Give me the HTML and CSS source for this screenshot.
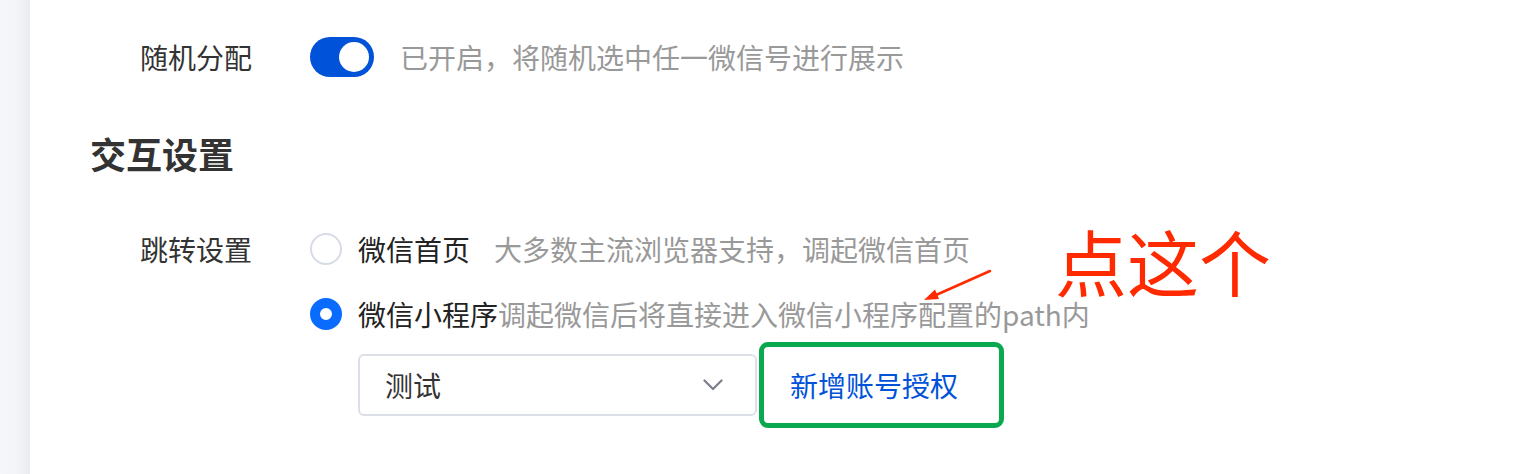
FILE: index.html
```html
<!DOCTYPE html>
<html lang="zh-CN">

<head>
    <meta charset="UTF-8">
    <meta name="viewport" content="width=device-width, initial-scale=1.0">
    <title>交互设置</title>
    <link rel="stylesheet" href="styles.css">
</head>

<body>
    <div class="page">
        <div class="side"></div>
        <div class="main">
            <div class="row row-random">
                <span class="label">随机分配</span>
                <div class="control">
                    <span class="switch"><span class="knob"></span></span>
                    <span class="tip switch-tip">已开启，将随机选中任一微信号进行展示</span>
                </div>
            </div>

            <h2 class="title">交互设置</h2>

            <div class="row row-jump">
                <span class="label">跳转设置</span>
                <div class="options">
                    <div class="radio">
                        <span class="dot"></span>
                        <span class="name">微信首页</span>
                        <span class="tip tip-gap">大多数主流浏览器支持，调起微信首页</span>
                    </div>
                    <div class="radio checked">
                        <span class="dot"></span>
                        <span class="name">微信小程序</span>
                        <span class="tip">调起微信后将直接进入微信小程序配置的path内</span>
                    </div>
                    <div class="picker">
                        <div class="select">
                            <span class="value">测试</span>
                            <svg class="arrow-down" width="20" height="12" viewBox="0 0 20 12">
                                <polyline points="1.5,1.5 10,10 18.5,1.5" fill="none" stroke="#7b7f8a" stroke-width="2.2" stroke-linecap="round" stroke-linejoin="round" />
                            </svg>
                        </div>
                        <div class="auth">新增账号授权</div>
                    </div>
                </div>
            </div>

            <!-- 标注 -->
            <svg class="mark-arrow" width="80" height="40" viewBox="0 0 80 40">
                <line x1="16" y1="30" x2="70" y2="6" stroke="#ff2a00" stroke-width="2.5" stroke-linecap="round" />
                <polygon points="4,35 19,34 15,24.5" fill="#ff2a00" />
            </svg>
            <div class="mark-text">点这个</div>
        </div>
    </div>
</body>

</html>
```

FILE: styles.css
```css
* {
    margin: 0;
    padding: 0;
    box-sizing: border-box;
}

body {
    background: #fff;
    font-family: "Noto Sans CJK SC", "Noto Sans", sans-serif;
    color: #333;
}

.page {
    display: flex;
    min-height: 100vh;
}

.side {
    width: 30px;
    flex: none;
    background: linear-gradient(to right, #f4f6f9 0%, #f2f4f8 60%, #e9ebf0 100%);
}

.main {
    position: relative;
    flex: 1;
    padding: 37px 0 0 60px;
}

.row {
    display: flex;
    padding-left: 50px;
}

.label {
    width: 170px;
    flex: none;
    font-size: 28px;
    color: #333;
}

.row-random .label {
    line-height: 40px;
}

.control {
    display: flex;
    align-items: center;
}

.switch {
    display: flex;
    justify-content: flex-end;
    align-items: center;
    width: 64px;
    height: 40px;
    padding: 5px;
    border-radius: 20px;
    background: #0052d9;
}

.knob {
    width: 30px;
    height: 30px;
    border-radius: 50%;
    background: #fff;
}

.tip {
    font-size: 28px;
    color: #999;
    white-space: nowrap;
}

.switch-tip {
    margin-left: 26px;
    line-height: 40px;
}

.title {
    margin-top: 58px;
    font-size: 36px;
    line-height: 36px;
    font-weight: 700;
    color: #333;
}

.row-jump {
    margin-top: 62px;
}

.row-jump .label {
    line-height: 32px;
}

.options {
    display: flex;
    flex-direction: column;
}

.radio {
    display: flex;
    align-items: center;
    height: 32px;
    font-size: 28px;
    line-height: 32px;
}

.radio + .radio {
    margin-top: 33px;
}

.dot {
    width: 32px;
    height: 32px;
    flex: none;
    border: 2px solid #d6dbe6;
    border-radius: 50%;
    background: #fff;
    margin-right: 16px;
}

.radio.checked .dot {
    border: 10px solid #0a6cff;
}

.name {
    color: #222;
}

.tip-gap {
    margin-left: 24px;
}

.picker {
    display: flex;
    align-items: center;
    height: 62px;
    margin: 24px 0 0 48px;
}

.select {
    display: flex;
    align-items: center;
    justify-content: space-between;
    width: 399px;
    height: 62px;
    padding: 0 32px 0 25px;
    border: 2px solid #dcdfe8;
    border-radius: 6px;
    font-size: 28px;
    color: #333;
}

.auth {
    display: flex;
    align-items: center;
    width: 245px;
    height: 86px;
    margin-left: 2px;
    padding-left: 26px;
    border: 5px solid #0aa84f;
    border-radius: 9px;
    font-size: 28px;
    color: #0052d9;
}

.mark-arrow {
    position: absolute;
    left: 890px;
    top: 265px;
}

.mark-text {
    position: absolute;
    left: 1025px;
    top: 224px;
    font-size: 72px;
    line-height: 72px;
    color: #ff2a00;
    white-space: nowrap;
}
```
